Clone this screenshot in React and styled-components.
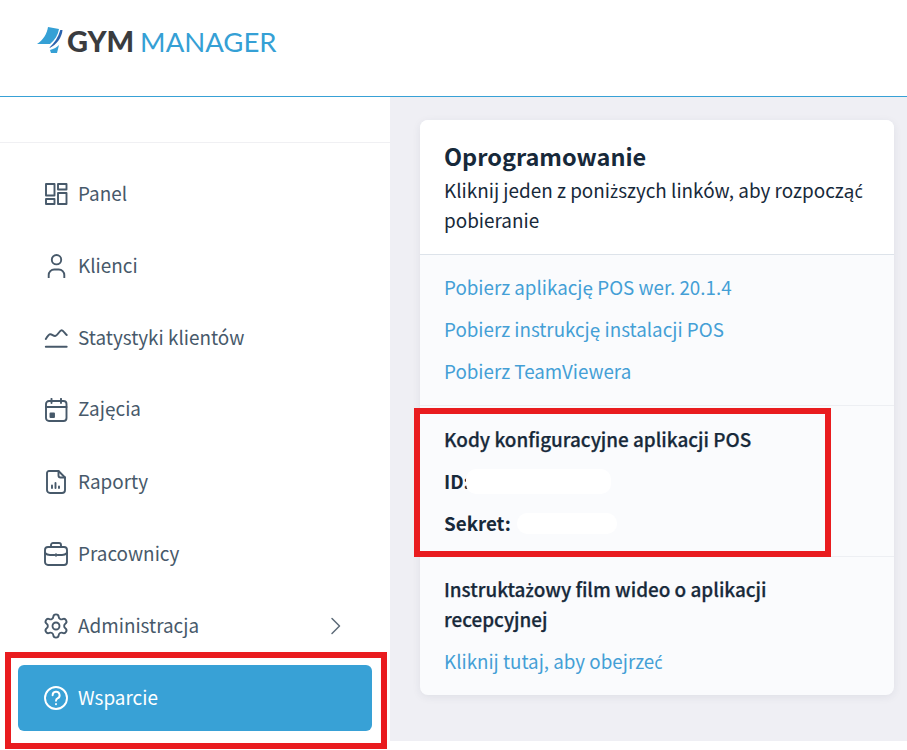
import styled, { createGlobalStyle } from "styled-components";
import { Settings } from "lucide-react";

const Global = createGlobalStyle`
  html, body {
    margin: 0;
    padding: 0;
    height: 750px;
    overflow: hidden;
    background: #fff;
    font-family: "Noto Sans CJK JP", "Noto Sans", sans-serif;
  }
  * { box-sizing: border-box; }
`;

const Page = styled.div`
  position: relative;
  width: 907px;
  height: 750px;
`;

const Header = styled.header`
  height: 97px;
  border-bottom: 1px solid #38a1d6;
  padding: 25px 0 0 36px;
  display: flex;
  align-items: flex-start;
  gap: 3px;
`;

const LogoText = styled.div`
  font-family: "Lato", sans-serif;
  font-size: 27.5px;
  font-weight: 400;
  line-height: 32px;
  white-space: nowrap;
  color: #35a0d5;
  letter-spacing: 0;
  b {
    font-size: 29px;
    font-weight: 900;
    color: #3a3c3f;
    margin-right: 6px;
  }
`;

const Body = styled.div`
  display: flex;
  height: 644px;
`;

const Sidebar = styled.aside`
  width: 390px;
  flex-shrink: 0;
  background: #fff;
`;

const SideTop = styled.div`
  height: 46px;
  border-bottom: 1px solid #f0f0f3;
`;

const Nav = styled.nav`
  padding: 15px 18px 0;
  display: flex;
  flex-direction: column;
`;

const NavItem = styled.a`
  height: ${(p) => (p.$active ? "66px" : "72px")};
  margin: ${(p) => (p.$active ? "3px 0" : "0")};
  padding: 0 26px;
  display: flex;
  align-items: center;
  gap: 10px;
  border-radius: 6px;
  font-size: 18.9px;
  background: ${(p) => (p.$active ? "#38a1d6" : "transparent")};
  color: ${(p) => (p.$active ? "#fff" : "#47596a")};
  svg {
    flex-shrink: 0;
    width: 24px;
    height: 24px;
    fill: none;
    stroke: currentColor;
    stroke-width: 1.9;
    stroke-linecap: round;
    stroke-linejoin: round;
  }
  span {
    flex: 1;
    position: relative;
    top: -2px;
  }
`;

const GearIcon = styled(Settings)`
  && {
    width: 28px;
    height: 28px;
    margin: -2px;
    stroke-width: 1.6;
  }
`;

const ChevronSvg = styled.svg`
  && {
    stroke-width: 1.5;
    color: #5d6b78;
  }
`;

const Main = styled.main`
  flex: 1;
  background: #efeff4;
  padding: 23px 13px 0 30px;
`;

const Card = styled.section`
  height: 575px;
  border-radius: 8px;
  overflow: hidden;
  background: #fafbfd;
  box-shadow: 0 2px 8px rgba(40, 50, 80, 0.08);
`;

const CardHead = styled.div`
  height: 135px;
  background: #fff;
  border-bottom: 1px solid #dde3ea;
  padding: 18px 24px 0;
  color: #17293a;
`;

const Title = styled.h2`
  margin: 0;
  font-size: 23.5px;
  line-height: 37px;
  font-weight: 700;
`;

const Sub = styled.p`
  margin: 0;
  font-size: 18.9px;
  line-height: 30px;
`;

const Section = styled.div`
  height: ${(p) => p.$h}px;
  padding: ${(p) => p.$top}px 24px 0;
  border-bottom: ${(p) => (p.$last ? "none" : "1px solid #edeff3")};
  display: flex;
  flex-direction: column;
  gap: 12px;
`;

const Link = styled.a`
  font-size: 18.8px;
  line-height: 30px;
  color: #449fd6;
`;

const Strong = styled.div`
  font-size: 18.9px;
  line-height: 30px;
  font-weight: 500;
  -webkit-text-stroke: 0.25px #17293a;
  color: #17293a;
`;

const CodeRow = styled.div`
  font-size: 18.8px;
  line-height: 30px;
  font-weight: 700;
  color: #17293a;
  display: flex;
  align-items: center;
`;

const Alt = styled.span`
  font-family: "Noto Sans", sans-serif;
  font-size: 0.92em;
  line-height: 0;
`;

const Blob = styled.i`
  display: block;
  background: #fff;
  width: ${(p) => p.$w}px;
  height: ${(p) => p.$h}px;
  margin-left: ${(p) => p.$ml}px;
  border-radius: 10px;
`;

const RedBox = styled.div`
  position: absolute;
  left: ${(p) => p.$x}px;
  top: ${(p) => p.$y}px;
  width: ${(p) => p.$w}px;
  height: ${(p) => p.$h}px;
  border: 6px solid #e91c1f;
  pointer-events: none;
`;

const Logo = () => (
  <svg width="28" height="30" viewBox="0 0 28 30">
    <path d="M12 2 L23 4 C22 10 19 15 14 19 L1 19 C7 15 11 9 12 2 Z" fill="#35a0d5" />
    <path d="M26.5 5 C26 12 21 20 13 23 C18.5 18 22.5 12 24.3 5 Z" fill="#2b63ae" />
    <path d="M14 25 C18 24 21 22 23 20 L21 28 L15 28 Z" fill="#35a0d5" />
  </svg>
);

const PanelIcon = () => (
  <svg viewBox="0 0 24 24">
    <rect x="2" y="2" width="8.5" height="11.5" />
    <rect x="14" y="2" width="8.5" height="5.5" />
    <rect x="2" y="17" width="8.5" height="5" />
    <rect x="14" y="11" width="8.5" height="11" />
  </svg>
);

const UserIcon = () => (
  <svg viewBox="0 0 24 24">
    <circle cx="12.5" cy="5.7" r="4.7" />
    <path d="M4.7 23.5 v-2.5 a5.5 5.5 0 0 1 5.5 -5.5 h4.6 a5.5 5.5 0 0 1 5.5 5.5 v2.5" />
  </svg>
);

const ChartIcon = () => (
  <svg viewBox="0 0 24 24">
    <path d="M1.8 13 C3 11 4.5 8.5 6 8.3 C8 8 9 10 11 10 C13.5 10 15.5 4.2 17.7 4.2 C19 4.2 21 7.5 22.7 9" />
    <path d="M1.8 20.7 H22.7" />
  </svg>
);

const CalendarIcon = () => (
  <svg viewBox="0 0 24 24">
    <rect x="2" y="3" width="20.5" height="20" rx="3" />
    <path d="M2 9 H22.5 M7.5 0.8 V5 M17 0.8 V5" />
    <rect x="6.5" y="15.5" width="3.5" height="3.5" fill="currentColor" />
  </svg>
);

const ReportIcon = () => (
  <svg viewBox="0 0 24 24">
    <path d="M5 1 H14.5 L21 7.5 V20 A3 3 0 0 1 18 23 H6 A3 3 0 0 1 3 20 V3 A2 2 0 0 1 5 1 Z" />
    <path d="M14.5 1 V5.5 A2 2 0 0 0 16.5 7.5 H21" />
    <path d="M8 18 V15.5 M11.5 18 V13 M15 18 V16.5" />
  </svg>
);

const CaseIcon = () => (
  <svg viewBox="0 0 24 24">
    <rect x="1" y="5" width="22" height="18" rx="3" />
    <path d="M7 5 V3 A2 2 0 0 1 9 1 H15 A2 2 0 0 1 17 3 V5" />
    <path d="M1 11 Q3 13 6 13 H10.5 M13.5 13 H18 Q21 13 23 11" />
    <path d="M12 12.2 v1.6" />
  </svg>
);

const Chevron = () => (
  <ChevronSvg viewBox="0 0 24 24">
    <path d="M10 4.5 L17.5 12 L10 19.5" />
  </ChevronSvg>
);

const HelpIcon = () => (
  <svg viewBox="0 0 24 24">
    <circle cx="12" cy="12" r="11" />
    <path d="M8.6 9.2 A3.5 3.5 0 1 1 13.5 12.4 C12.4 13 12 13.6 12 14.8" />
    <path d="M12 18 v.2" />
  </svg>
);

const items = [
  ["Panel", PanelIcon],
  ["Klienci", UserIcon],
  ["Statystyki klientów", ChartIcon],
  ["Zajęcia", CalendarIcon],
  ["Raporty", ReportIcon],
  ["Pracownicy", CaseIcon],
];

export default function App() {
  return (
    <Page>
      <Global />
      <Header>
        <Logo />
        <LogoText>
          <b>GYM</b>MANAGER
        </LogoText>
      </Header>
      <Body>
        <Sidebar>
          <SideTop />
          <Nav>
            {items.map(([label, Icon]) => (
              <NavItem key={label}>
                <Icon />
                <span>{label}</span>
              </NavItem>
            ))}
            <NavItem>
              <GearIcon />
              <span>Administracja</span>
              <Chevron />
            </NavItem>
            <NavItem $active>
              <HelpIcon />
              <span>Wsparcie</span>
            </NavItem>
          </Nav>
        </Sidebar>
        <Main>
          <Card>
            <CardHead>
              <Title>Oprogramowanie</Title>
              <Sub>
                Kliknij jeden z poni<Alt>ż</Alt>szych linków, aby rozpocz&#261;<Alt>ć</Alt> pobieranie
              </Sub>
            </CardHead>
            <Section $h={151} $top={17}>
              <Link>Pobierz aplikację POS wer. 20.1.4</Link>
              <Link>Pobierz instrukcję instalacji POS</Link>
              <Link>Pobierz TeamViewera</Link>
            </Section>
            <Section $h={151} $top={18}>
              <Strong>Kody konfiguracyjne aplikacji POS</Strong>
              <CodeRow>
                ID:
                <Blob $w={145} $h={25} $ml={-4} />
              </CodeRow>
              <CodeRow>
                Sekret:
                <Blob $w={100} $h={21} $ml={6} />
              </CodeRow>
            </Section>
            <Section $h={138} $top={17} $last>
              <Strong>
                Instrukta<Alt>ż</Alt>owy film wideo o aplikacji
                <br />
                recepcyjnej
              </Strong>
              <Link>
                Kliknij tutaj, aby obejrze<Alt>ć</Alt>
              </Link>
            </Section>
          </Card>
        </Main>
      </Body>
      <RedBox $x={5} $y={652} $w={382} $h={97} />
      <RedBox $x={414} $y={408} $w={417} $h={149} />
    </Page>
  );
}
